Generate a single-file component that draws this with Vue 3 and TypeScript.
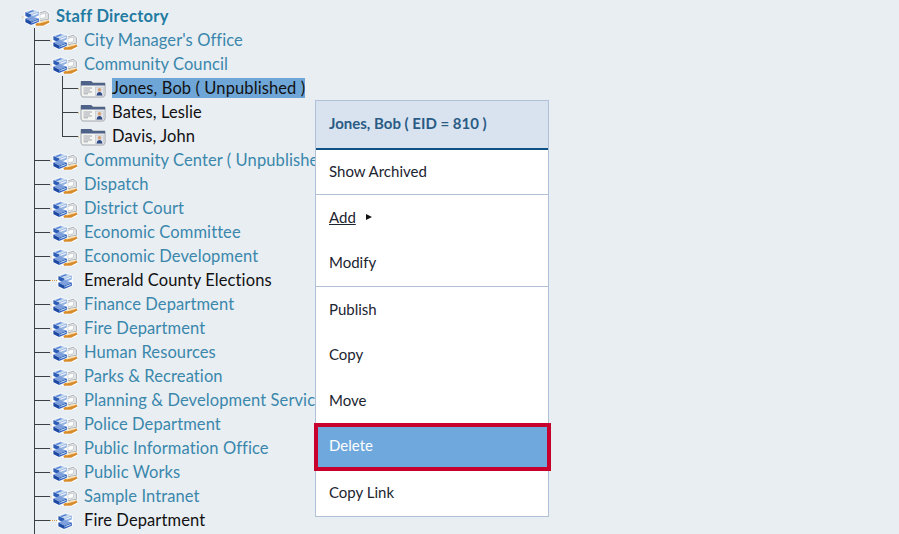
<script setup lang="ts">
interface Node { label: string; kind: 'dept' | 'single'; }
const before: Node[] = [{ label: "City Manager's Office", kind: 'dept' }, { label: 'Community Council', kind: 'dept' }];
const people = ['Jones, Bob ( Unpublished )', 'Bates, Leslie', 'Davis, John'];
const after: Node[] = [
  { label: 'Community Center ( Unpublished )', kind: 'dept' },
  { label: 'Dispatch', kind: 'dept' },
  { label: 'District Court', kind: 'dept' },
  { label: 'Economic Committee', kind: 'dept' },
  { label: 'Economic Development', kind: 'dept' },
  { label: 'Emerald County Elections', kind: 'single' },
  { label: 'Finance Department', kind: 'dept' },
  { label: 'Fire Department', kind: 'dept' },
  { label: 'Human Resources', kind: 'dept' },
  { label: 'Parks & Recreation', kind: 'dept' },
  { label: 'Planning & Development Services', kind: 'dept' },
  { label: 'Police Department', kind: 'dept' },
  { label: 'Public Information Office', kind: 'dept' },
  { label: 'Public Works', kind: 'dept' },
  { label: 'Sample Intranet', kind: 'dept' },
  { label: 'Fire Department', kind: 'single' },
];
</script>

<template>
  <div class="page">
    <svg width="0" height="0" class="defs">
      <defs>
        <symbol id="machine" viewBox="0 0 16 18">
          <path d="M1 3.6 L9 0.4 L15.6 3.2 L15.6 14 L7.5 17.8 L0.4 14.6 L0.4 4 Z" fill="#fff"/>
          <path d="M1.4 4 L9 1.2 L14.8 3.6 L7.2 6.6 Z" fill="#c9d9f0"/>
          <path d="M1.4 4 L7.2 6.6 L7.2 10.6 L1.4 8 Z" fill="#2d5db4"/>
          <path d="M7.2 6.6 L14.8 3.6 L14.8 7.6 L7.2 10.6 Z" fill="#8fb0e2"/>
          <path d="M8.4 6.8 L13.8 4.8 L13.8 6 L8.4 8 Z" fill="#f2f6fc"/>
          <path d="M3 4.2 L8.6 2.2 L10.4 3 L5 5.1 Z" fill="#4f7fcf"/>
          <path d="M1.4 10.4 L7 8 L14.8 10.6 L7.2 13.6 Z" fill="#7d9fdb"/>
          <path d="M1.4 10.4 L7.2 13.6 L7.2 17 L1.4 14.2 Z" fill="#1e4aa3"/>
          <path d="M7.2 13.6 L14.8 10.6 L14.8 13.8 L7.2 17 Z" fill="#2f62bd"/>
          <path d="M8.4 14 L13.8 12 L13.8 13 L8.4 15 Z" fill="#dbe6f6"/>
        </symbol>
        <symbol id="dept" viewBox="0 0 28 20">
          <circle cx="0.8" cy="10" r=".6" fill="#d99a3a"/>
          <path d="M15 5 L24 3 L27.5 6 L27.5 17 L21 19.6 L12 19 Z" fill="#fff" opacity=".85"/>
          <path d="M16 6.4 L23.4 4.2 L26.4 6.6 L26.4 12.4 L16 14 Z" fill="#e4e5e6" stroke="#8f96a0" stroke-width=".7"/>
          <path d="M18 7.6 L23.6 6.2 L23.6 10.6 L18 11.8 Z" fill="#fff" stroke="#aab1ba" stroke-width=".5"/>
          <path d="M13 16 L26.8 13.4 L27.4 15.4 L21 18.8 L14 18.8 Z" fill="#d88b2a"/>
          <path d="M15 15.2 L25.6 12.8 L26.2 14 L17 16.4 Z" fill="#f8dfae"/>
          <use href="#machine" x="2" y="1" width="16" height="18"/>
        </symbol>
      </defs>
    </svg>

    <div class="row root">
      <svg class="ico dept"><use href="#dept"/></svg>
      <span class="label bold">Staff Directory</span>
    </div>

    <div class="tree">
      <div v-for="n in before" :key="n.label" class="row">
        <span class="conn"></span>
        <svg class="ico dept"><use href="#dept"/></svg>
        <span class="label link">{{ n.label }}</span>
      </div>

      <div class="people">
        <div v-for="(p, i) in people" :key="p" class="row person">
          <span class="conn" :class="{ end: i === people.length - 1 }"></span>
          <svg class="ico dept" viewBox="0 0 28 20">
            <path d="M0 10 H2" stroke="#d99a3a" stroke-width="1" stroke-dasharray="1 1"/>
            <path d="M3 2.5 H13 L15 4 H27 V16 L25.5 18 H4.5 L3 16 Z" fill="#f4f4f2" stroke="#8d939b" stroke-width=".8"/>
            <path d="M3 2 H13 L15 4 H27 V6.4 H3 Z" fill="#4f6289"/>
            <path d="M5.5 9 H14 M5.5 11 H12 M5.5 13 H14 M5.5 14.8 H10" stroke="#9aa0a8" stroke-width=".9"/>
            <rect x="17.5" y="8" width="8" height="8.6" fill="#dfe5ea" stroke="#a5acb4" stroke-width=".4"/>
            <circle cx="21.5" cy="10.8" r="1.9" fill="#d9a67c"/>
            <path d="M18.6 16.6 C18.8 14 20 13 21.5 13 C23 13 24.2 14 24.4 16.6 Z" fill="#2f4a86"/>
          </svg>
          <span class="label dark" :class="{ selected: i === 0 }">{{ p }}</span>
        </div>
      </div>

      <div v-for="(n, i) in after" :key="i" class="row">
        <span class="conn"></span>
        <template v-if="n.kind === 'dept'">
          <svg class="ico dept"><use href="#dept"/></svg>
          <span class="label link">{{ n.label }}</span>
        </template>
        <template v-else>
          <span class="dots"></span>
          <svg class="ico single"><use href="#machine"/></svg>
          <span class="label dark">{{ n.label }}</span>
        </template>
      </div>
    </div>

    <div class="menu">
      <div class="head">Jones, Bob ( EID = 810 )</div>
      <div class="group first">
        <div class="item">Show Archived</div>
      </div>
      <div class="group mid">
        <div class="item"><u>Add</u><span class="arrow"></span></div>
        <div class="item">Modify</div>
      </div>
      <div class="group last">
        <div class="item">Publish</div>
        <div class="item">Copy</div>
        <div class="item">Move</div>
        <div class="item delete">Delete</div>
        <div class="item">Copy Link</div>
      </div>
    </div>
  </div>
</template>

<style>
html, body { margin: 0; background: #e9eef3; overflow: hidden; }
</style>

<style scoped>
.page {
  position: relative;
  width: 899px;
  height: 534px;
  overflow: hidden;
  box-sizing: border-box;
  padding-top: 4px;
  padding-left: 22px;
  background: #e9eef3;
  font-family: Lato, "Open Sans", sans-serif;
  font-size: 16.5px;
}
.defs { position: absolute; }
.row { display: flex; align-items: center; height: 24px; white-space: nowrap; }
.tree { margin-left: 12px; border-left: 1px solid #3c4147; padding-bottom: 40px; }
.conn {
  flex: none;
  width: 15px;
  height: 24px;
  background: linear-gradient(#3c4147, #3c4147) left 12px / 100% 1px no-repeat;
}
.ico { flex: none; display: block; margin-top: 2px; }
.ico.dept { width: 28px; height: 20px; margin-right: 6px; }
.ico.single { width: 16px; height: 18px; margin-right: 11px; }
.dots { flex: none; width: 7px; height: 0; border-top: 1px dotted #d99a3a; }
.label { letter-spacing: .1px; }
.bold { font-weight: 700; color: #1f7ba1; letter-spacing: .3px; }
.link { color: #3a87ab; }
.dark { color: #111; }
.selected { background: #6ea6d8; line-height: 20px; }
.people { margin-left: 27px; }
.person .conn {
  width: 16px;
  background:
    linear-gradient(#3c4147, #3c4147) left 12px / 100% 1px no-repeat,
    linear-gradient(#3c4147, #3c4147) left top / 1px 100% no-repeat;
}
.person .conn.end {
  background:
    linear-gradient(#3c4147, #3c4147) left 12px / 100% 1px no-repeat,
    linear-gradient(#3c4147, #3c4147) left top / 1px 13px no-repeat;
}
.menu {
  position: absolute;
  left: 315px;
  top: 100px;
  width: 234px;
  box-sizing: border-box;
  background: #fff;
  border: 1px solid #b0c0d6;
  font-size: 15px;
  color: #1c2430;
}
.head {
  height: 47px;
  line-height: 45px;
  padding-left: 13px;
  background: #d9e3f0;
  border-bottom: 2px solid #0e5285;
  font-weight: 700;
  color: #2a5b85;
}
.group { border-bottom: 1px solid #b0c0d6; }
.group.last { border-bottom: 0; }
.item {
  box-sizing: border-box;
  height: 45.67px;
  padding-left: 13px;
  padding-bottom: 2px;
  display: flex;
  align-items: center;
}
.first .item { height: 44px; }
.mid .item { height: 45.5px; }
.arrow {
  display: inline-block;
  margin-left: 10px;
  width: 0;
  height: 0;
  border-left: 6px solid #111;
  border-top: 3px solid transparent;
  border-bottom: 3px solid transparent;
}
.delete {
  margin: -1px -3px -1px -2px;
  height: 48px;
  padding-left: 11px;
  padding-bottom: 4px;
  border: 4px solid #c8002d;
  background: #6fa8dc;
  color: #fff;
}
</style>
